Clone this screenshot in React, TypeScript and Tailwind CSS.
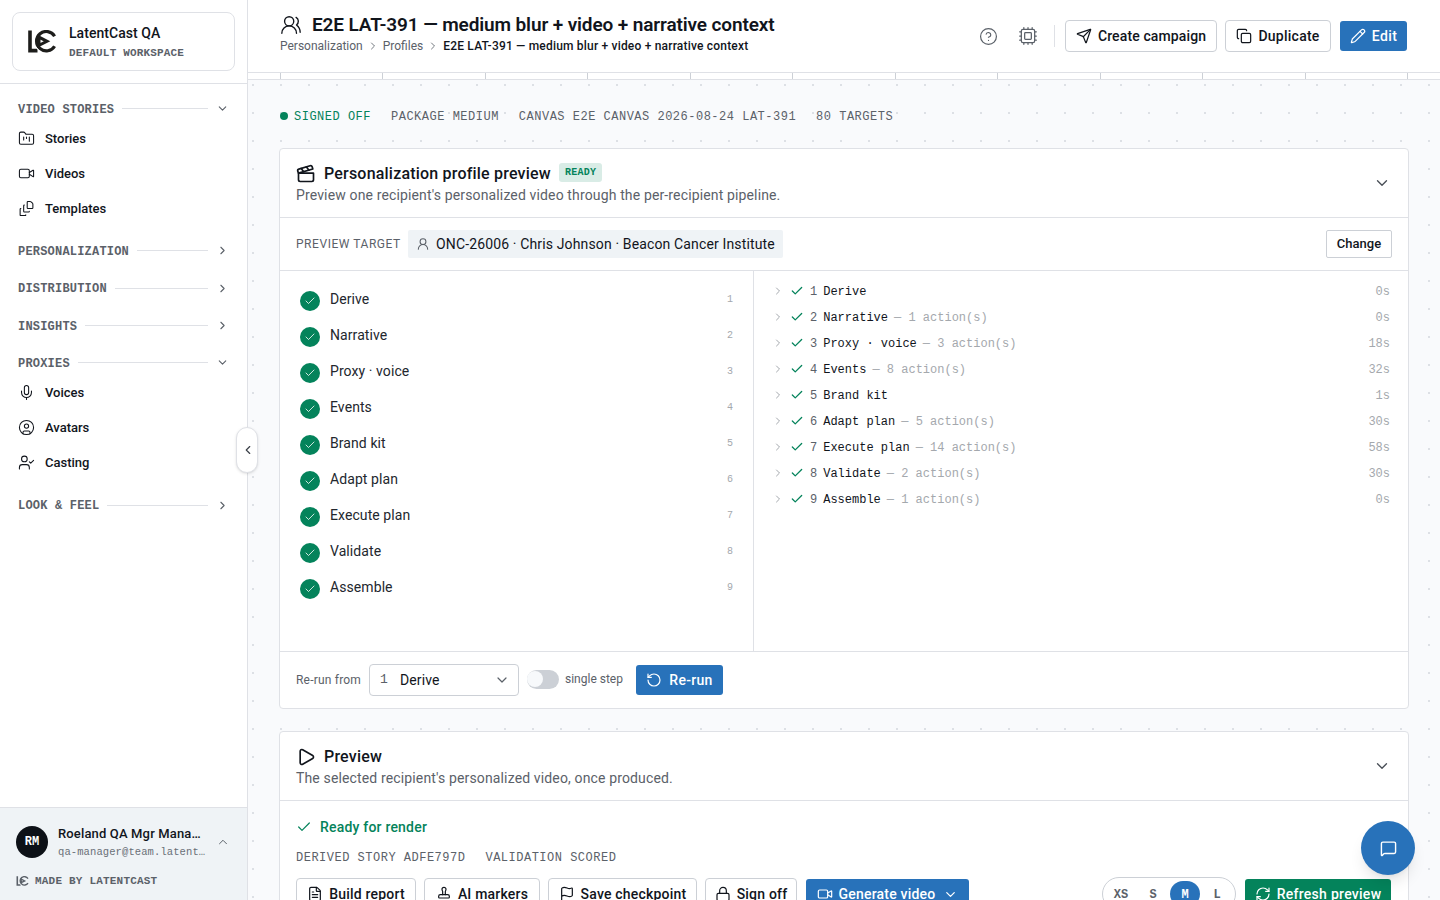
import React from 'react';
import {
  Check, ChevronDown, ChevronLeft, ChevronRight, ChevronUp, CircleHelp, CircleUser, Clapperboard, Copy, Cpu,
  FileStack, FileText, Flag, FolderKanban, Lock, MessageSquare, Mic, Pencil, Play, RefreshCw, RotateCcw, Send,
  Stamp, UserCheck, UserRound, UsersRound, Video,
} from 'lucide-react';
import type { LucideIcon } from 'lucide-react';

interface NavItem {
  label: string;
  icon: LucideIcon;
}

interface NavSection {
  title: string;
  items?: NavItem[];
}

interface Step {
  name: string;
  actions?: number;
  duration: string;
}

const navSections: NavSection[] = [
  {
    title: 'VIDEO STORIES',
    items: [
      { label: 'Stories', icon: FolderKanban },
      { label: 'Videos', icon: Video },
      { label: 'Templates', icon: FileStack },
    ],
  },
  { title: 'PERSONALIZATION' },
  { title: 'DISTRIBUTION' },
  { title: 'INSIGHTS' },
  {
    title: 'PROXIES',
    items: [
      { label: 'Voices', icon: Mic },
      { label: 'Avatars', icon: CircleUser },
      { label: 'Casting', icon: UserCheck },
    ],
  },
  { title: 'LOOK & FEEL' },
];

const steps: Step[] = [
  { name: 'Derive', duration: '0s' },
  { name: 'Narrative', actions: 1, duration: '0s' },
  { name: 'Proxy · voice', actions: 3, duration: '18s' },
  { name: 'Events', actions: 8, duration: '32s' },
  { name: 'Brand kit', duration: '1s' },
  { name: 'Adapt plan', actions: 5, duration: '30s' },
  { name: 'Execute plan', actions: 14, duration: '58s' },
  { name: 'Validate', actions: 2, duration: '30s' },
  { name: 'Assemble', actions: 1, duration: '0s' },
];

const Logo: React.FC<{ className?: string }> = ({ className }) => (
  <svg viewBox="0 0 28 23" fill="none" stroke="currentColor" className={className}>
    <path d="M2 0.5V20.6H9.5" strokeWidth="3.6" />
    <path d="M26.6 6.2A9.7 9.7 0 1 0 26.6 16.2" strokeWidth="3.2" />
    <path d="M11 7.2L19 11.3L11 15.4Z" strokeWidth="3" />
    <path d="M7.8 16.6L12.4 22.6" stroke="white" strokeWidth="1" />
  </svg>
);

const Sidebar: React.FC = () => (
  <aside className="relative flex w-[248px] shrink-0 flex-col border-r border-[#dfe1e6] bg-white">
    <div className="border-b border-[#dfe1e6] p-3">
      <div className="flex h-[59px] items-center rounded-lg border border-[#dfe1e6] pl-[15px]">
        <Logo className="h-[23px] w-7 text-[#1d1d1b]" />
        <div className="ml-[13px] pt-px">
          <p className="text-[14px] leading-[18px] font-medium tracking-[0.05px]">LatentCast QA</p>
          <p className="mt-1 font-['Liberation_Mono',monospace] text-[11px] leading-[14px] font-bold tracking-[0.17px] text-[#5b6169]">
            DEFAULT WORKSPACE
          </p>
        </div>
      </div>
    </div>

    <nav className="flex flex-1 flex-col gap-3 px-[18px] pt-3">
      {navSections.map(section => (
        <div key={section.title}>
          <div className="flex h-[25.3px] items-center gap-2 text-[#5b6169]">
            <span className="mt-0.5 font-['Liberation_Mono',monospace] text-[12px] font-bold tracking-[0.2px]">
              {section.title}
            </span>
            <span className="h-px flex-1 bg-[#dfe1e6]" />
            {section.items ? <ChevronDown size={13} /> : <ChevronRight size={13} />}
          </div>
          {section.items?.map(({ label, icon: Icon }) => (
            <a key={label} className="flex h-[35px] items-center gap-[10px]">
              <Icon size={17} strokeWidth={1.5} />
              <span className="text-[13px] font-medium">{label}</span>
            </a>
          ))}
        </div>
      ))}
    </nav>

    <div className="h-[93px] border-t border-[#dfe1e6] bg-[#eff3f6] px-4 pt-[17px]">
      <div className="flex items-center">
        <div className="flex size-8 items-center justify-center rounded-full bg-[#0d1117] font-['Liberation_Mono',monospace] text-[12px] font-bold text-white">
          RM
        </div>
        <div className="ml-[10px] w-[149px] whitespace-nowrap">
          <p className="text-[13px] leading-[18px] font-medium tracking-[0.15px]">Roeland QA Mgr Mana…</p>
          <p className="mt-[2px] font-['Liberation_Mono',monospace] text-[10.5px] leading-[14px] tracking-[0.1px] text-[#6a7078]">
            qa-manager@team.latent…
          </p>
        </div>
        <ChevronUp size={14} strokeWidth={1.7} className="ml-[9px] text-[#5b6169]" />
      </div>
      <div className="mt-[15px] flex items-center gap-[6px] text-[#5b6169]">
        <Logo className="h-[10px] w-[13px]" />
        <span className="font-['Liberation_Mono',monospace] text-[11px] leading-[14px] font-bold tracking-[0.2px]">
          MADE BY LATENTCAST
        </span>
      </div>
    </div>

    <button className="absolute top-[427px] -right-[11px] z-10 flex h-[46px] w-[22px] items-center justify-center rounded-full border border-[#dfe1e6] bg-white shadow-sm">
      <ChevronLeft size={14} strokeWidth={2} className="ml-px text-[#3b4048]" />
    </button>
  </aside>
);

const TopBar: React.FC = () => (
  <header className="flex h-[73px] shrink-0 items-start justify-between border-b border-[#dfe1e6] bg-white pr-[33px] pl-8">
    <div className="pt-[13px]">
      <div className="flex items-center gap-[10px]">
        <UsersRound size={22} strokeWidth={1.5} />
        <h1 className="text-[19px] leading-[24px] font-semibold tracking-[-0.12px]">
          E2E LAT-391 — medium blur + video + narrative context
        </h1>
      </div>
      <div className="flex items-center gap-1 text-[12px] leading-[18px] text-[#5b6169]">
        <span>Personalization</span>
        <ChevronRight size={12} strokeWidth={1.7} />
        <span>Profiles</span>
        <ChevronRight size={12} strokeWidth={1.7} />
        <span className="font-medium tracking-[0.19px] text-[#11151c]">
          E2E LAT-391 — medium blur + video + narrative context
        </span>
      </div>
    </div>
    <div className="flex items-center pt-5">
      <CircleHelp size={19} strokeWidth={1.5} className="text-[#5b6169]" />
      <Cpu size={20} strokeWidth={1.5} className="ml-5 text-[#5b6169]" />
      <span className="mr-[10px] ml-4 h-[22px] w-px bg-[#dfe1e6]" />
      <button className="flex h-8 w-[152px] items-center justify-center gap-[6px] rounded border border-[#ccd0d6] text-[14px] font-medium tracking-[0.12px]">
        <Send size={16} strokeWidth={1.8} />
        Create campaign
      </button>
      <button className="ml-2 flex h-8 w-[106px] items-center justify-center gap-[6px] rounded border border-[#ccd0d6] text-[14px] font-medium tracking-[0.25px]">
        <Copy size={16} strokeWidth={1.8} />
        Duplicate
      </button>
      <button className="ml-[9px] flex h-[30px] w-[67px] items-center justify-center gap-[6px] rounded-[3px] bg-[#2872ba] text-[14px] font-medium tracking-[0.4px] text-white">
        <Pencil size={16} strokeWidth={1.8} />
        Edit
      </button>
    </div>
  </header>
);

const Ruler: React.FC = () => (
  <div className="h-[7px] shrink-0 border-b border-[#dfe1e6] bg-white px-8">
    <div className="flex h-full border-r border-[#ccd0d6]">
      {Array.from({ length: 11 }, (_, i) => (
        <span key={i} className="flex-1 border-l border-[#ccd0d6]" />
      ))}
    </div>
  </div>
);

const CardHeader: React.FC<{ icon: LucideIcon; title: string; badge?: string; description: string }> = ({
  icon: Icon,
  title,
  badge,
  description,
}) => (
  <div className="flex h-[69px] items-center justify-between border-b border-[#dfe1e6] pr-[17px] pl-4">
    <div className="pt-px">
      <div className="flex items-center">
        <Icon size={20} strokeWidth={2} />
        <h2 className="ml-2 text-[16px] leading-6 font-medium tracking-[0.2px]">{title}</h2>
        {badge && (
          <span className="mb-[3px] ml-2 flex h-[19px] items-center rounded-[3px] bg-[#d9ece6] px-[6px] font-['Liberation_Mono',monospace] text-[10px] font-bold tracking-[0.3px] text-[#04835b]">
            {badge}
          </span>
        )}
      </div>
      <p className="-mt-px text-[14px] leading-5 tracking-[0.14px] text-[#5b6169]">{description}</p>
    </div>
    <ChevronDown size={18} strokeWidth={1.8} className="text-[#4a5058]" />
  </div>
);

const StepList: React.FC = () => (
  <div className="w-[474px] border-r border-[#dfe1e6] px-5 pt-[10px]">
    {steps.map((step, i) => (
      <div key={step.name} className="flex h-9 items-center">
        <span className="mt-[3px] flex size-5 items-center justify-center rounded-full bg-[#04835b] text-white">
          <Check size={12} strokeWidth={1.6} />
        </span>
        <span className="ml-[10px] flex-1 text-[14px] tracking-[0.08px] text-[#23272e]">{step.name}</span>
        <span className="font-['Liberation_Mono',monospace] text-[10px] text-[#a4a8ad]">{i + 1}</span>
      </div>
    ))}
  </div>
);

const StepLog: React.FC = () => (
  <div className="flex-1 px-[18px] pt-[7px] font-['Liberation_Mono',monospace] text-[12px]">
    {steps.map((step, i) => (
      <div key={step.name} className="flex h-[26px] items-center">
        <ChevronRight size={12} strokeWidth={2} className="text-[#a4a8ad]" />
        <Check size={14} strokeWidth={2.2} className="ml-[6px] text-[#04835b]" />
        <div className="mt-0.5 ml-[6px] flex flex-1 gap-[6px] text-[#a4a8ad]">
          <span className="text-[#5b6169]">{i + 1}</span>
          <span className="text-[#11151c]">{step.name}</span>
          {step.actions && <span>— {step.actions} action(s)</span>}
          <span className="ml-auto">{step.duration}</span>
        </div>
      </div>
    ))}
  </div>
);

const ProfilePreviewCard: React.FC = () => (
  <section className="rounded border border-[#dfe1e6] bg-white">
    <CardHeader
      icon={Clapperboard}
      title="Personalization profile preview"
      badge="READY"
      description="Preview one recipient's personalized video through the per-recipient pipeline."
    />
    <div className="flex h-[53px] items-center border-b border-[#dfe1e6] px-4">
      <span className="w-[112px] text-[12px] tracking-[0.55px] text-[#5b6169]">PREVIEW TARGET</span>
      <span className="flex h-7 w-[375px] items-center gap-[6px] rounded-[2px] bg-[#eff3f6] pl-2 text-[14px] tracking-[0.14px] text-[#11151c]">
        <UserRound size={14} strokeWidth={1.8} className="text-[#5b6169]" />
        ONC-26006 · Chris Johnson · Beacon Cancer Institute
      </span>
      <button className="ml-auto h-7 w-[66px] rounded-[2px] border border-[#ccd0d6] text-[13px] font-medium">
        Change
      </button>
    </div>
    <div className="flex h-[381px] border-b border-[#dfe1e6]">
      <StepList />
      <StepLog />
    </div>
    <div className="flex h-[56px] items-center px-4">
      <span className="w-[73px] text-[12px] tracking-[0.2px] text-[#5b6169]">Re-run from</span>
      <button className="flex h-8 w-[150px] items-center rounded border border-[#ccd0d6] pr-2 pl-[10px] text-left text-[14px] tracking-[0.12px]">
        <span className="w-5 font-['Liberation_Mono',monospace] text-[13px] text-[#5b6169]">1</span>
        Derive
        <ChevronDown size={16} strokeWidth={1.8} className="ml-auto text-[#5b6169]" />
      </button>
      <span className="mb-0.5 ml-2 flex h-[19px] w-8 items-center rounded-full bg-[#ccd0d6]">
        <span className="size-4 rounded-full bg-[#f7f9fb]" />
      </span>
      <span className="mb-0.5 ml-[6px] w-[71px] text-[12px] text-[#5b6169]">single step</span>
      <button className="flex h-[30px] w-[87px] items-center justify-center gap-[7px] rounded-[3px] bg-[#2872ba] text-[14px] font-medium tracking-[0.3px] text-white">
        <RotateCcw size={16} strokeWidth={1.8} />
        Re-run
      </button>
    </div>
  </section>
);

const actions = [
  { label: 'Build report', icon: FileText, width: 'w-[120px]' },
  { label: 'AI markers', icon: Stamp, width: 'w-[116px]' },
  { label: 'Save checkpoint', icon: Flag, width: 'w-[149px]' },
  { label: 'Sign off', icon: Lock, width: 'w-[92px]' },
];

const sizes = ['XS', 'S', 'M', 'L'];

const PreviewCard: React.FC = () => (
  <section className="mt-[22px] h-[240px] rounded border border-[#dfe1e6] bg-white">
    <CardHeader icon={Play} title="Preview" description="The selected recipient's personalized video, once produced." />
    <div className="px-4 pt-4">
      <div className="flex items-center gap-2 text-[#04835b]">
        <Check size={16} strokeWidth={1.8} />
        <span className="text-[14px] leading-5 font-medium tracking-[0.2px]">Ready for render</span>
      </div>
      <div className="mt-[13px] flex gap-5 font-['Liberation_Mono',monospace] text-[12px] leading-4 tracking-[0.5px] text-[#5b6169]">
        <span>DERIVED STORY ADFE797D</span>
        <span>VALIDATION SCORED</span>
      </div>
      <div className="mt-[11px] flex h-[34px] items-center">
        <div className="flex gap-2">
          {actions.map(({ label, icon: Icon, width }) => (
            <button
              key={label}
              className={`flex h-8 items-center justify-center gap-[6px] rounded border border-[#ccd0d6] text-[14px] font-medium tracking-[0.2px] ${width}`}
            >
              <Icon size={16} strokeWidth={1.8} />
              {label}
            </button>
          ))}
        </div>
        <button className="ml-[9px] flex h-[30px] w-[163px] items-center justify-center gap-[6px] rounded-[3px] bg-[#2872ba] text-[14px] font-medium tracking-[0.2px] text-white">
          <Video size={16} strokeWidth={1.8} />
          Generate video
          <ChevronDown size={15} strokeWidth={2} className="ml-[2px]" />
        </button>
        <div className="ml-auto flex h-[34px] items-center rounded-full border border-[#ccd0d6] px-[2px] font-['Liberation_Mono',monospace] text-[12px] font-bold text-[#5b6169]">
          {sizes.map(size => (
            <span
              key={size}
              className={
                size === 'M'
                  ? 'mx-px flex h-[26px] w-[30px] items-center justify-center rounded-full bg-[#2872ba] pt-px text-white'
                  : 'flex h-[26px] w-8 items-center justify-center pt-px'
              }
            >
              {size}
            </span>
          ))}
        </div>
        <button className="mr-px ml-[9px] flex h-[30px] w-[146px] items-center justify-center gap-[6px] rounded-[3px] bg-[#04835b] text-[14px] font-medium tracking-[0.27px] text-white">
          <RefreshCw size={16} strokeWidth={1.8} />
          Refresh preview
        </button>
      </div>
    </div>
  </section>
);

export default function App() {
  return (
    <div className="flex h-screen overflow-hidden bg-white font-[Roboto,sans-serif] text-[#11151c]">
      <Sidebar />
      <div className="flex min-w-0 flex-1 flex-col">
        <TopBar />
        <Ruler />
        <main className="flex-1 overflow-hidden bg-[#f9fafc] bg-[radial-gradient(circle,#dde0e5_1.5px,transparent_1.5px)] bg-[length:28px_28px] bg-[position:-9px_-9px] px-[31px]">
          <div className="flex h-[68px] items-center pt-1 pl-px font-['Liberation_Mono',monospace] text-[12px] tracking-[0.5px] text-[#5b6169]">
            <div className="flex items-center gap-5">
              <span className="flex items-center gap-[6px] text-[#04835b]">
                <span className="size-2 rounded-full bg-[#04835b]" />
                <span className="mt-0.5">SIGNED OFF</span>
              </span>
              <span className="mt-0.5">PACKAGE MEDIUM</span>
              <span className="mt-0.5">CANVAS E2E CANVAS 2026-08-24 LAT-391</span>
              <span className="mt-0.5">80 TARGETS</span>
            </div>
          </div>
          <ProfilePreviewCard />
          <PreviewCard />
        </main>
      </div>
      <button className="fixed right-[25px] bottom-[25px] flex size-[54px] items-center justify-center rounded-full bg-[#2872ba] text-white shadow-lg">
        <MessageSquare size={17} strokeWidth={2} />
      </button>
    </div>
  );
}
